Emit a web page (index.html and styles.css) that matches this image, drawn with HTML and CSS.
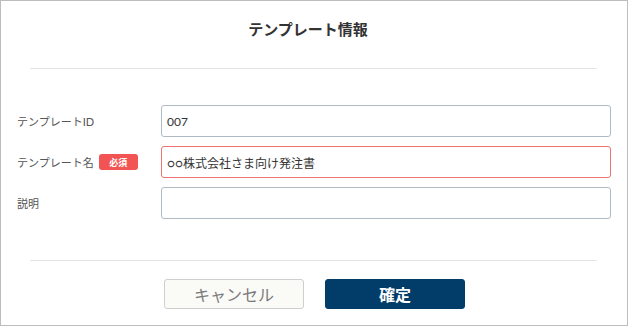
FILE: index.html
```html
<!DOCTYPE html>
<html lang="ja">
<head>
<meta charset="utf-8">
<title>テンプレート情報</title>
<link rel="stylesheet" href="styles.css">
</head>
<body>
<div class="dialog">
  <h1 class="title">テンプレート情報</h1>
  <hr class="divider divider-top">
  <form class="form">
    <div class="row">
      <label class="label" for="tid">テンプレートID</label>
      <input class="field" id="tid" type="text" value="007">
    </div>
    <div class="row">
      <label class="label" for="tname">テンプレート名<span class="badge">必須</span></label>
      <input class="field field-error" id="tname" type="text" value="○○株式会社さま向け発注書">
    </div>
    <div class="row">
      <label class="label" for="tdesc">説明</label>
      <input class="field" id="tdesc" type="text" value="">
    </div>
  </form>
  <hr class="divider divider-bottom">
  <div class="actions">
    <button class="btn btn-cancel" type="button">キャンセル</button>
    <button class="btn btn-ok" type="button">確定</button>
  </div>
</div>
</body>
</html>
```
FILE: styles.css
```css
html, body {
  margin: 0;
  padding: 0;
  background: #ffffff;
}
body {
  font-family: "Lato", "Noto Sans CJK JP", sans-serif;
  color: #333333;
}
.dialog {
  width: 628px;
  height: 326px;
  box-sizing: border-box;
  border: 1px solid #bdbdbd;
  background: #ffffff;
  padding-top: 18px;
}
.title {
  margin: 0;
  padding-right: 12px;
  font-size: 15px;
  line-height: 20px;
  font-weight: 600;
  text-align: center;
  color: #333333;
}
.divider {
  border: 0;
  height: 1px;
  background: #e4e4e4;
  margin: 0 30px 0 29px;
}
.divider-top {
  margin-top: 29px;
}
.form {
  margin: 36px 16px 0 16px;
  display: flex;
  flex-direction: column;
  gap: 9px;
}
.row {
  display: flex;
  align-items: center;
  height: 32px;
}
.label {
  width: 144px;
  flex: none;
  font-size: 11px;
  color: #555555;
  display: flex;
  align-items: center;
}
.badge {
  display: inline-flex;
  align-items: center;
  justify-content: center;
  width: 39px;
  height: 16px;
  margin-left: 5px;
  border-radius: 3px;
  background: #f25454;
  color: #ffffff;
  font-size: 9px;
  font-weight: 700;
}
.field {
  flex: 1;
  height: 32px;
  box-sizing: border-box;
  border: 1px solid #aebbc4;
  border-radius: 3px;
  padding: 0 5px;
  font-family: "Lato", "Noto Sans CJK JP", sans-serif;
  font-size: 12px;
  color: #333333;
  background: #ffffff;
  outline: none;
}
.field-error {
  border-color: #f07272;
}
.divider-bottom {
  margin-top: 41px;
}
.actions {
  display: flex;
  justify-content: center;
  gap: 21px;
  margin-top: 18px;
  padding-left: 1px;
}
.btn {
  width: 140px;
  height: 30px;
  box-sizing: border-box;
  border-radius: 3px;
  font-family: "Lato", "Noto Sans CJK JP", sans-serif;
  font-size: 16px;
  cursor: pointer;
}
.btn-cancel {
  background: #fafaf7;
  border: 1px solid #cfcfcf;
  color: #7a7a7a;
}
.btn-ok {
  background: #023c69;
  border: 1px solid #023c69;
  color: #ffffff;
  font-weight: 700;
}
```
